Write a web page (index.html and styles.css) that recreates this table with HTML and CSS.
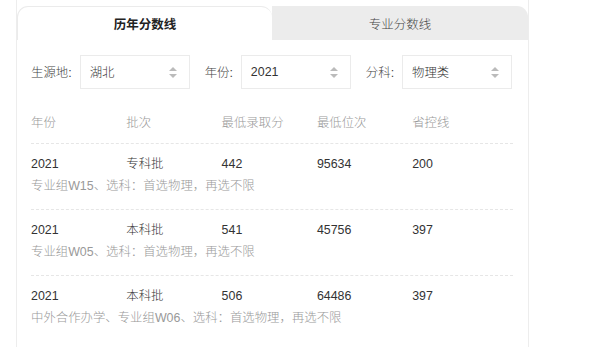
FILE: index.html
```html
<!DOCTYPE html>
<html lang="zh-CN">
<head>
<meta charset="utf-8">
<title>分数线</title>
<link rel="stylesheet" href="styles.css">
</head>
<body>
<div class="panel">
  <div class="tabs">
    <div class="tab tab-active">历年分数线</div>
    <div class="tab tab-idle">专业分数线</div>
  </div>
  <div class="filters">
    <div class="filter">
      <span class="label">生源地:</span>
      <div class="select"><span>湖北</span><span class="arrows"><i class="up"></i><i class="down"></i></span></div>
    </div>
    <div class="filter">
      <span class="label">年份:</span>
      <div class="select"><span>2021</span><span class="arrows"><i class="up"></i><i class="down"></i></span></div>
    </div>
    <div class="filter">
      <span class="label">分科:</span>
      <div class="select"><span>物理类</span><span class="arrows"><i class="up"></i><i class="down"></i></span></div>
    </div>
  </div>
  <div class="table">
    <div class="row head">
      <span>年份</span><span>批次</span><span>最低录取分</span><span>最低位次</span><span>省控线</span>
    </div>
    <div class="item">
      <div class="row vals"><span>2021</span><span>专科批</span><span>442</span><span>95634</span><span>200</span></div>
      <div class="note">专业组W15、选科：首选物理，再选不限</div>
    </div>
    <div class="item">
      <div class="row vals"><span>2021</span><span>本科批</span><span>541</span><span>45756</span><span>397</span></div>
      <div class="note">专业组W05、选科：首选物理，再选不限</div>
    </div>
    <div class="item">
      <div class="row vals"><span>2021</span><span>本科批</span><span>506</span><span>64486</span><span>397</span></div>
      <div class="note">中外合作办学、专业组W06、选科：首选物理，再选不限</div>
    </div>
  </div>
</div>
</body>
</html>
```
FILE: styles.css
```css
html, body {
  margin: 0;
  padding: 0;
  background: #fff;
}
body {
  font-family: "Liberation Sans", "Noto Sans CJK SC", sans-serif;
  font-size: 12.4px;
  font-weight: 300;
  color: #333;
}
.panel {
  margin-left: 16px;
  width: 511px;
  border-left: 1px solid #ededed;
  border-right: 1px solid #ededed;
  padding-top: 6px;
  min-height: 341px;
}
.tabs {
  display: flex;
  height: 34px;
}
.tab {
  flex: 0 0 auto;
  display: flex;
  align-items: center;
  justify-content: center;
  font-size: 12.5px;
}
.tab-active {
  width: 254px;
  border-top: 1px solid #ebebeb;
  border-left: 1px solid #ebebeb;
  border-top-left-radius: 11px;
  border-top-right-radius: 11px;
  font-weight: bold;
  color: #222;
  background: #fff;
}
.tab-idle {
  width: 256px;
  background: #ececec;
  border-top-right-radius: 11px;
  color: #444;
}
.filters {
  display: flex;
  padding: 15px 0 0 14px;
  gap: 15px;
}
.filter {
  display: flex;
  align-items: center;
  gap: 8px;
}
.label {
  color: #444;
}
.select {
  box-sizing: border-box;
  width: 110px;
  height: 34px;
  border: 1px solid #ebebeb;
  display: flex;
  align-items: center;
  justify-content: space-between;
  padding: 0 10px 0 9px;
  color: #333;
}
.arrows {
  display: flex;
  flex-direction: column;
  gap: 3px;
  margin-right: 2px;
}
.arrows i {
  display: block;
  width: 0;
  height: 0;
  border-left: 4px solid transparent;
  border-right: 4px solid transparent;
}
.arrows .up {
  border-bottom: 4px solid #bbb;
}
.arrows .down {
  border-top: 4px solid #bbb;
}
.table {
  padding: 26px 15px 0 14px;
}
.row {
  display: grid;
  grid-template-columns: repeat(5, 95.3px);
  line-height: 16px;
}
.head {
  color: #999;
  padding-bottom: 12px;
}
.item {
  border-top: 1px dashed #e6e6e6;
  padding: 12px 0 15px;
}
.vals {
  color: #333;
}
.note {
  margin-top: 6px;
  line-height: 16px;
  color: #999;
}
```
